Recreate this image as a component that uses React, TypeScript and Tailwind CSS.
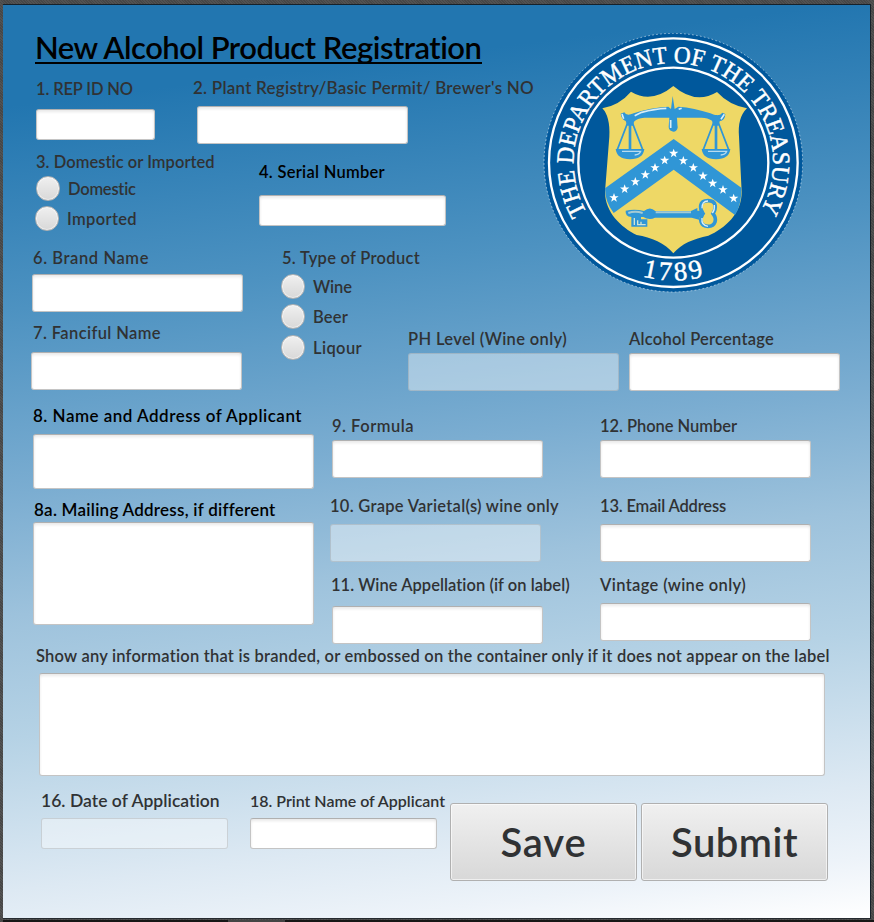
import { useLayoutEffect, useRef } from "react";
import type { ReactNode } from "react";

/** Single line of text tracked out or in so that it spans `width` pixels. */
function Fit({ width, className = "", children }: { width: number; className?: string; children: string }) {
  const ref = useRef<HTMLSpanElement>(null);
  useLayoutEffect(() => {
    const el = ref.current;
    if (!el) return;
    el.style.letterSpacing = "0px";
    const natural = el.getBoundingClientRect().width;
    el.style.letterSpacing = `${(width - natural) / children.length}px`;
  }, [width, children]);
  return (
    <span ref={ref} className={`inline-block whitespace-nowrap ${className}`}>
      {children}
    </span>
  );
}

function Label({ w, className = "", size = "text-[16.5px]", text }: { w: number; className?: string; size?: string; text: string }) {
  return (
    <label className={`block h-5 w-0 leading-5 whitespace-nowrap ${size} ${className}`}>
      <Fit width={w}>{text}</Fit>
    </label>
  );
}

const inputBase = "block rounded-[3px] border ";
const inputOn =
  inputBase + "border-[#c4c4c4] border-t-[#b0b0b0] bg-white shadow-[inset_0_2px_3px_rgba(0,0,0,0.09)] outline-none";
const inputOff =
  inputBase + "border-[#8c8c8c]/30 bg-white/42 outline-none";

function Radio({ w, text, className = "" }: { w: number; text: string; className?: string }) {
  return (
    <div className={`flex h-[25px] ${className}`}>
      <span className="h-[25px] w-6 shrink-0 rounded-full border border-[#b2b2b2] bg-linear-to-b from-[#f0f0f0] to-[#d8d8d8] shadow-[inset_0_0_0_1px_rgba(255,255,255,0.5)]" />
      <Label w={w} text={text} className="mt-[3px] ml-2" />
    </div>
  );
}

function Button({ w, children }: { w: number; children: string }) {
  return (
    <button className="flex h-[78px] w-[187px] justify-center rounded-[3px] border border-[#b0b0b0] bg-linear-to-b from-[#f0f0f0] to-[#d8d8d8] pt-[14px] text-[40px] leading-[48px] font-semibold shadow-[inset_0_0_0_1px_rgba(255,255,255,0.6)]">
      <Fit width={w}>{children}</Fit>
    </button>
  );
}

const stars = [
  [237, 518], [269, 492], [301, 470], [331, 449], [360, 428], [389, 406], [416, 385],
  [445, 407], [475, 428], [504, 453], [533, 475], [564, 494], [596, 520],
];

function Pan({ x }: { x: number }) {
  return (
    <g transform={`translate(${x} 0)`}>
      <path d="M0 275 L-38 374 M0 275 L38 374" stroke="#3096d6" strokeWidth="5" />
      <path d="M0 270 V380" stroke="#3096d6" strokeWidth="8" />
      <path d="M-43 372 H43 Q40 402 0 403 Q-40 402 -43 372Z" fill="#3096d6" />
      <path d="M-24 379 H32 Q28 390 14 390" fill="none" stroke="#b9dcef" strokeWidth="4" />
    </g>
  );
}

function Seal() {
  return (
    <svg viewBox="24 24 780 780" className="block size-[260px]">
      <defs>
        <path id="arcTop" d="M156 562.5 A299 299 0 1 1 674 562.5" />
        <path id="arcBottom" d="M110 590 A352 352 0 0 0 720 590" />
      </defs>
      <circle cx="415" cy="413" r="388" fill="#00589c" />
      <circle cx="415" cy="413" r="388" fill="none" stroke="#e8f2f8" strokeOpacity="0.7" strokeWidth="2.5" strokeDasharray="5 7" />
      <circle cx="415" cy="413" r="373" fill="none" stroke="#fff" strokeWidth="7" />
      <circle cx="415" cy="413" r="285" fill="none" stroke="#fff" strokeWidth="7" />
      <g fill="#fff" stroke="#fff" strokeWidth="1.5" fontFamily="'Liberation Serif', serif" fontWeight="400">
        <text fontSize="74">
          <textPath href="#arcTop" textLength="1246" lengthAdjust="spacingAndGlyphs">THE DEPARTMENT OF THE TREASURY</textPath>
        </text>
        <text fontSize="80" textAnchor="middle" letterSpacing="9">
          <textPath href="#arcBottom" startOffset="50.5%">1789</textPath>
        </text>
      </g>
      <path
        d="M202 250 Q254 240 288 200 Q350 237 415 183 Q482 240 546 201 Q582 240 636 250 Q607 278 612 335 L620 500 C621 565 570 610 520 632 C475 642 440 655 415 685 C390 655 350 637 305 630 C258 606 210 562 210 500 L223 335 Q226 275 202 250Z"
        fill="#eed866"
      />
      <path d="M416 342 L619 488 Q620 540 600 570 L416 434 L236 564 Q210 532 210 490Z" fill="#3096d6" />
      {stars.map(([x, y]) => (
        <path
          key={x}
          transform={`translate(${x} ${y})`}
          d="M0-14 L3.5-4.5 H14 L5.5 2 L8.5 12 L0 6 L-8.5 12 L-5.5 2 L-14-4.5 H-3.5Z"
          fill="#fff"
        />
      ))}
      <Pan x={285} />
      <Pan x={543} />
      <path
        d="M257 266 L268 262 Q274 275 296 265 Q348 247 400 245 L408 252 L413 213 L419 252 L430 245 Q478 248 526 265 Q552 277 562 263 L571 267 Q570 287 554 289 L551 302 H535 L531 287 Q518 278 500 278 H328 Q306 280 297 290 L294 302 H277 L272 288 Q259 283 257 266Z"
        fill="#3096d6"
      />
      <path d="M404 266 H425 L428 308 Q425 320 415 320 Q402 318 401 306Z" fill="#3096d6" />
      <path d="M261 267 L266 281 M299 272 L320 262 Q360 251 394 250 M431 253 L440 250 M558 283 L568 268 M407 285 V309" fill="none" stroke="#d9edf7" strokeWidth="5" />
      <path
        d="M272 557 Q300 551 327 558 Q345 543 361 558 H468 L487 549 V557 H505 V577 H492 V584 L470 578 H360 Q343 587 325 576 H318 V583 H337 V605 H289 V576 Q270 574 272 557Z"
        fill="#3096d6"
      />
      <path d="M362 562 H468 M280 564 Q300 557 323 564" stroke="#a5cad4" strokeWidth="6" fill="none" />
      <path d="M298 579 V600 M308 586 V599 H318 V590 M318 599 H332" fill="none" stroke="#d1e4d4" strokeWidth="4" />
      <path
        d="M519 527 C547 527 543 552 534 566 C547 582 542 604 519 604 C496 604 492 582 504 566 C494 552 491 527 519 527Z"
        fill="none"
        stroke="#3096d6"
        strokeWidth="11"
      />
      <path d="M501 550 Q500 528 519 528 M501 579 Q498 601 519 604 M538 540 Q540 554 532 564" fill="none" stroke="#d9edf7" strokeWidth="4" />
    </svg>
  );
}

function Field({
  label, w, box, gap, disabled, className = "", dark, indent = "", size,
}: {
  label: string; w: number; box: string; gap: string; disabled?: boolean; className?: string; dark?: boolean; indent?: string; size?: string;
}) {
  return (
    <div className={className}>
      <Label w={w} text={label} size={size} className={`${indent} ${dark ? "text-black" : ""}`} />
      <input disabled={disabled} className={`${box} ${gap} ${disabled ? inputOff : inputOn}`} />
    </div>
  );
}

function Column({ className, children }: { className: string; children: ReactNode }) {
  return <div className={`flex shrink-0 flex-col ${className}`}>{children}</div>;
}

export default function App() {
  return (
    <div className="h-[922px] w-[874px] overflow-hidden bg-[#4c4c4c] bg-[repeating-linear-gradient(45deg,#474747_0_1px,#525252_1px_2px)] pt-1 pl-[3px]">
      <main className="h-[915px] w-[868px] overflow-hidden border-t border-r border-b border-[#16212a] border-b-[#262b30] bg-[linear-gradient(173deg,#2276b0_0%,#2276b0_10%,#4d92c1_30%,#7badd1_48%,#9dc2dc_60%,#b5d2e5_72%,#dde9f3_87%,#edf3f9_94%,#ffffff_100%)] font-['Lato',sans-serif] font-semibold text-[#303234]">
        <section className="flex h-[401px]">
          <Column className="w-[405px]">
            <h1 className="mt-[25px] ml-8 h-[34px] w-[447px] border-b-2 border-black text-[31px] leading-[34px] font-semibold text-black">
              <Fit width={447}>New Alcohol Product Registration</Fit>
            </h1>
            <div className="ml-[33px] flex pt-[14px]">
              <Field label="1. REP ID NO" w={97} box="w-[119px] h-[31px]" gap="mt-[10px]" className="mt-px" />
              <Field label="2. Plant Registry/Basic Permit/ Brewer's NO" w={341} box="w-[211px] h-[38px]" gap="mt-2 ml-[4px]" className="ml-[38px]" size="text-[17px]" />
            </div>
            <div className="flex h-[104px]">
              <Column className="w-[256px] pt-2">
                <Label w={179} text="3. Domestic or Imported" className="ml-[33px]" />
                <Radio w={68} text="Domestic" className="mt-1 ml-[33px]" />
                <Radio w={70} text="Imported" className="mt-[5px] ml-8" />
              </Column>
              <Field label="4. Serial Number" w={126} box="w-[187px] h-[31px]" gap="mt-[13px]" dark className="pt-[18px]" />
            </div>
            <div className="ml-7 flex">
              <Column className="w-[250px]">
                <Field label="6. Brand Name" w={116} box="w-[211px] h-[38px]" gap="mt-[6px] ml-px" indent="ml-[2px]" />
                <Field label="7. Fanciful Name" w={128} box="w-[211px] h-[38px]" gap="mt-[9px]" indent="ml-[2px]" className="mt-[11px]" />
              </Column>
              <Column className="w-[120px]">
                <Label w={138} text="5. Type of Product" className="ml-px" />
                <Radio w={39} text="Wine" className="mt-[6px]" />
                <Radio w={35} text="Beer" className="mt-[5px]" />
                <Radio w={49} text="Liqour" className="mt-[6px]" />
              </Column>
            </div>
          </Column>
          <Column className="w-[432px] pt-7">
            <div className="ml-[135px]">
              <Seal />
            </div>
            <div className="mt-9 flex gap-[10px]">
              <Field label="PH Level (Wine only)" w={159} box="w-[211px] h-[38px]" gap="mt-1" disabled />
              <Field label="Alcohol Percentage" w={145} box="w-[211px] h-[38px]" gap="mt-1" />
            </div>
          </Column>
        </section>

        <section className="flex h-[240px] pl-[27px]">
          <Column className="ml-[3px] w-[281px]">
            <Label w={269} text="8. Name and Address of Applicant" size="text-[17px]" className="text-black" />
            <textarea className={`mt-2 h-[55px] w-[281px] resize-none ${inputOn}`} />
            <Label w={241} text="8a. Mailing Address, if different" size="text-[17px]" className="mt-[11px] ml-px text-black" />
            <textarea className={`mt-[2px] h-[103px] w-[281px] resize-none ${inputOn}`} />
          </Column>
          <Column className="ml-4 w-[270px] pt-[10px]">
            <Field label="9. Formula" w={82} box="w-[211px] h-[38px]" gap="mt-1 ml-[2px]" indent="ml-[2px]" />
            <Field label="10. Grape Varietal(s) wine only" w={229} box="w-[211px] h-[38px]" gap="mt-[8px]" disabled className="mt-[18px]" />
            <Field label="11. Wine Appellation (if on label)" w={239} box="w-[211px] h-[38px]" gap="mt-[11px] ml-[2px]" indent="ml-px" className="mt-[13px]" />
          </Column>
          <Column className="w-[211px] pt-[10px]">
            <Field label="12. Phone Number" w={137} box="w-[211px] h-[38px]" gap="mt-1" />
            <Field label="13. Email Address" w={126} box="w-[211px] h-[38px]" gap="mt-[8px]" className="mt-[18px]" />
            <Field label="Vintage (wine only)" w={146} box="w-[211px] h-[38px]" gap="mt-[8px]" className="mt-[13px]" />
          </Column>
        </section>

        <section className="ml-[33px]">
          <Label w={794} text="Show any information that is branded, or embossed on the container only if it does not appear on the label" />
          <textarea className={`mt-[7px] ml-[3px] h-[103px] w-[786px] resize-none ${inputOn}`} />
        </section>

        <section className="ml-[38px] flex pt-[15px]">
          <Field label="16. Date of Application" w={179} box="w-[187px] h-[31px]" gap="mt-[7px]" disabled className="w-[209px]" size="text-[17.5px]" />
          <Field label="18. Print Name of Applicant" w={195} box="w-[187px] h-[31px]" gap="mt-[7px]" className="w-[200px]" size="text-[16px]" />
          <div className="mt-3 flex gap-1">
            <Button w={86}>Save</Button>
            <Button w={127}>Submit</Button>
          </div>
        </section>
      </main>
      <footer className="h-[3px] bg-[#161616] pl-[225px]">
        <div className="mt-px h-[2px] w-[57px] bg-[#444]" />
      </footer>
    </div>
  );
}
